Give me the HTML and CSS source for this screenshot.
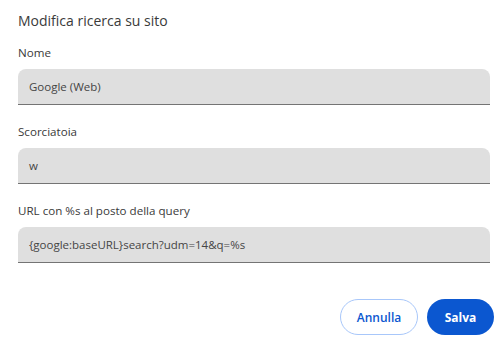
FILE: index.html
```html
<!DOCTYPE html>
<html lang="it">
<head>
<meta charset="utf-8">
<title>Modifica ricerca su sito</title>
<link rel="stylesheet" href="styles.css">
</head>
<body>
<div class="dialog">
  <h1 class="title">Modifica ricerca su sito</h1>
  <div class="fields">
    <div class="field">
      <label class="label">Nome</label>
      <div class="input">Google (Web)</div>
    </div>
    <div class="field">
      <label class="label">Scorciatoia</label>
      <div class="input">w</div>
    </div>
    <div class="field">
      <label class="label">URL con %s al posto della query</label>
      <div class="input">{google:baseURL}search?udm=14&amp;q=%s</div>
    </div>
  </div>
  <div class="actions">
    <button class="btn btn-cancel">Annulla</button>
    <button class="btn btn-save">Salva</button>
  </div>
</div>
</body>
</html>
```
FILE: styles.css
```css
html, body {
  margin: 0;
  padding: 0;
  background: #ffffff;
}
body {
  font-family: "Open Sans", "Noto Sans", sans-serif;
  color: #1f1f1f;
}
.dialog {
  width: 502px;
  height: 348px;
  box-sizing: border-box;
  padding: 10px 12px 0 18px;
}
.title {
  margin: 0;
  font-size: 14px;
  font-weight: 400;
  line-height: 22px;
  color: #3a3a3a;
}
.fields {
  display: flex;
  flex-direction: column;
  gap: 19px;
  margin-top: 13px;
}
.field {
  display: flex;
  flex-direction: column;
  gap: 8px;
}
.label {
  font-size: 11.6px;
  line-height: 16px;
  color: #3a3a3a;
}
.input {
  height: 35px;
  border-radius: 8px 8px 0 0;
  background: #dfdfdf;
  border-bottom: 1px solid #747474;
  padding: 0 11px;
  font-size: 11.5px;
  line-height: 35px;
  color: #454545;
}
.actions {
  display: flex;
  justify-content: flex-end;
  gap: 9px;
  margin-top: 36px;
  margin-right: -4px;
}
.btn {
  height: 36px;
  border-radius: 18px;
  font-family: "Open Sans", "Noto Sans", sans-serif;
  font-size: 12px;
  font-weight: 600;
  padding: 0;
  cursor: pointer;
}
.btn-cancel {
  width: 78px;
  background: #ffffff;
  border: 1px solid #a8c7fa;
  color: #0b57d0;
  font-weight: 600;
}
.btn-save {
  width: 67px;
  background: #0b57d0;
  border: none;
  color: #ffffff;
  font-weight: 700;
}
```
